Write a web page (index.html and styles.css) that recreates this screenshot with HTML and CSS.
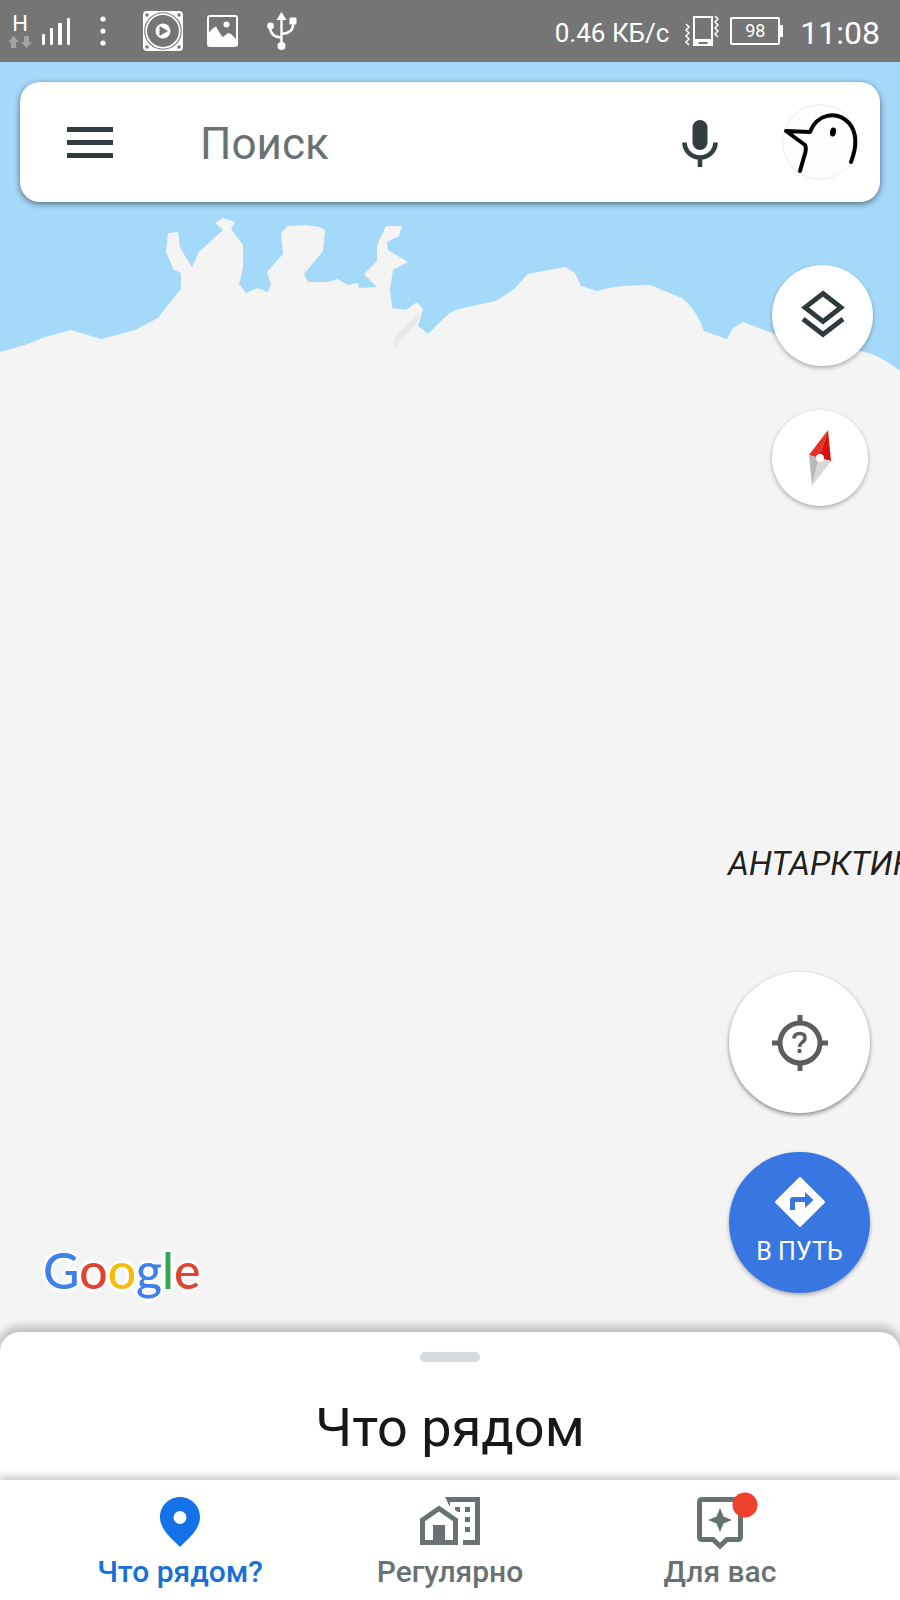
FILE: index.html
```html
<!DOCTYPE html>
<html lang="ru">
<head>
<meta charset="utf-8">
<meta name="viewport" content="width=device-width, initial-scale=1">
<title>Карты</title>
<link rel="stylesheet" href="styles.css">
</head>
<body>
<div class="app">
  <header class="status">
    <div class="status-group">
      <div class="network">
        <span class="network-type">H</span>
        <svg width="24" height="12" viewBox="0 0 24 12" fill="#a3a3a3"><path d="M5.500 0L11 6H8V12H3V6H0ZM16 0H21V6H24L18.500 12L13 6H16Z"/></svg>
      </div>
      <svg class="signal" width="28" height="28" viewBox="0 0 28 28" fill="#fff"><rect y="17" width="3" height="11" rx="1"/><rect x="8" y="11" width="3" height="17" rx="1"/><rect x="16" y="6" width="4" height="22" rx="1"/><rect x="25" y="1" width="3" height="27" rx="1"/></svg>
      <svg class="dots" width="6" height="30" viewBox="0 0 6 30" fill="#fff"><circle cx="3" cy="3" r="2.600"/><circle cx="3" cy="15" r="2.600"/><circle cx="3" cy="27" r="2.600"/></svg>
      <svg class="player" width="40" height="40" viewBox="0 0 40 40"><rect width="40" height="40" rx="4" fill="#fff"/><g fill="#757575"><circle cx="4" cy="4" r="1.700"/><circle cx="36" cy="4" r="1.700"/><circle cx="4" cy="36" r="1.700"/><circle cx="36" cy="36" r="1.700"/><circle cx="20" cy="20" r="18.800"/></g><circle cx="20" cy="20" r="16.800" fill="none" stroke="#fff" stroke-width="1.800"/><circle cx="20" cy="20" r="7.500" fill="#fff"/><path d="M16.500 15L25 20L16.500 25Z" fill="#757575"/></svg>
      <svg class="picture" width="32" height="32" viewBox="0 0 32 32"><rect x="1" y="1" width="29" height="30" rx="2" fill="none" stroke="#fff" stroke-width="2"/><circle cx="19.500" cy="9.500" r="3" fill="#fff"/><path d="M1 19L5 14L9 11.500L14 20L16 22L21 18L24 19L30 25V31H1Z" fill="#fff"/></svg>
      <svg width="30" height="40" viewBox="0 0 30 40"><path d="M14.500 6V34M3 15V17Q4 26 14 26.500M26 12V14Q26 22 14.500 23" fill="none" stroke="#fff" stroke-width="2.400"/><path d="M14.500 1L19.500 9H9.500Z" fill="#fff"/><circle cx="3.500" cy="15" r="3.400" fill="#fff"/><rect x="22.500" y="6.500" width="7" height="7" rx="1" fill="#fff"/><circle cx="14.500" cy="35" r="4" fill="#fff"/></svg>
    </div>
    <div class="status-group status-right">
      <span class="speed">0.46 КБ/с</span>
      <svg class="vibrate" width="34" height="32" viewBox="0 0 34 32" fill="none" stroke="#fff"><path d="M9 2H27V30H9Z" stroke-width="2"/><path d="M8 24H28V31H8Z" fill="#fff" stroke="none"/><path d="M13.500 28H22.500" stroke="#757575" stroke-width="2"/><path d="M1 9L4 12L1 15L4 18L1 21L4 24L1 27L4 30M30 1L33 4L30 7L33 10L30 13L33 16L30 19L33 22" stroke-width="1.500"/></svg>
      <span class="battery">98</span>
      <time class="clock">11:08</time>
    </div>
  </header>

  <main class="map">
    <svg class="coast" width="900" height="320" viewBox="0 62 900 320" preserveAspectRatio="none">
      <rect y="62" width="900" height="320" fill="#a5d9fa"/>
      <path fill="#f4f4f4" d="M0 352L25 345L45 337L71 330L101 339L135 330L158 318L168 305L181 289V273L174 270L166 252L168 233L178 232L180 248L192 267L199 252L223 230L215 223L223 218L235 222L231 229L243 245V268L239 284L246 293L257 288L268 292L271 285L267 272L283 254L281 233L288 226L305 225L320 227L325 230L323 251L304 274L308 282H328L337 279L348 285L358 283L359 288L377 287L364 274L377 261V245L386 226H402L399 236L387 242L388 250L408 262L393 270L390 289L392 308L406 310L417 302L423 309L418 326L428 334L443 319Q452 310 463 308L496 301L513 290L528 274L565 267L575 273L581 286L597 291Q615 285 650 285L682 298Q697 310 704 331L727 339L733 328L743 322L775 334L820 346L861 351Q880 355 900 371V382H0Z"/>
      <path fill="#e9e9e9" d="M421 311L416 324L394 348L395 337Z"/>
    </svg>

    <form class="search">
      <button class="icon-button" type="button" aria-label="Меню"><svg width="46" height="31" viewBox="0 0 46 31" fill="#333c3f"><path d="M0 0H46V5H0ZM0 13H46V18H0ZM0 26H46V31H0Z"/></svg></button>
      <input class="search-input" type="search" placeholder="Поиск" aria-label="Поиск">
      <button class="icon-button mic" type="button" aria-label="Голосовой поиск"><svg width="36" height="48" viewBox="0 0 36 48"><rect x="10.500" y="0" width="15" height="30" rx="7.500" fill="#333c3f"/><path d="M2.500 22.500A15.500 15 0 0 0 33.500 22.500M18 37V47" fill="none" stroke="#333c3f" stroke-width="4.600"/></svg></button>
      <button class="icon-button avatar" type="button" aria-label="Аккаунт"><svg width="76" height="76" viewBox="0 0 76 76"><circle cx="38" cy="38" r="37.300" fill="#fefefe" stroke="#e4e4e4" stroke-width=".7"/><g fill="none" stroke="#000" stroke-width="4" stroke-linecap="round" stroke-linejoin="round"><path d="M69 58C74 45 76 30 67 19C54 6 35 10 28 28L4 27L23 41Q25 45 22 53L18 67"/></g><ellipse cx="51" cy="28" rx="3" ry="4.500" transform="rotate(10 51 28)"/></svg></button>
    </form>

    <div class="controls">
      <button class="round layers" type="button" aria-label="Слои"><svg width="44" height="48" viewBox="0 0 44 48" fill="none" stroke="#30393c" stroke-width="4.800"><path d="M22 3.500L40 17.500L22 31.500L4 17.500Z"/><path d="M2 29L22 44.500L42 29"/></svg></button>
      <button class="round compass" type="button" aria-label="Компас"><svg width="24" height="58" viewBox="0 0 24 58"><path d="M20 1L1 26L11 29Z" fill="#e53027"/><path d="M20 1L23 32L11 29Z" fill="#d5150d"/><path d="M1 26L4 57L11 29Z" fill="#b9b9b9"/><path d="M23 32L4 57L11 29Z" fill="#d8d8d8"/><circle cx="12" cy="29" r="4" fill="#fff"/></svg></button>
      <span class="place">АНТАРКТИК</span>
      <button class="round locate" type="button" aria-label="Моё местоположение"><svg width="56" height="56" viewBox="0 0 56 56" fill="none" stroke="#5d5d5d" stroke-width="5"><circle cx="28" cy="28" r="20"/><path d="M28 0V8M28 48V56M0 28H8M48 28H56"/><path d="M22 23.500Q22 18.500 28 18.500Q33 18.500 33 23Q33 25.500 30 27.500Q27.500 29.500 27.500 32" stroke-width="3.500"/><circle cx="27.500" cy="36" r="2.200" fill="#5d5d5d" stroke="none"/></svg></button>
      <button class="round go" type="button"><svg width="50" height="50" viewBox="0 0 50 50"><path d="M23.500 1Q25 -1 26.500 1L49 23.500Q51 25 49 26.500L26.500 49Q25 51 23.500 49L1 26.500Q-1 25 1 23.500Z" fill="#fff"/><path d="M15 33V23Q15 20 18 20H30V15L38.500 23L30 31V25H20V33Z" fill="#3877e2"/></svg><span>В ПУТЬ</span></button>
    </div>
    <div class="google"><span class="blue">G</span><span class="red">o</span><span class="yellow">o</span><span class="blue">g</span><span class="green">l</span><span class="red">e</span></div>
  </main>

  <section class="sheet">
    <div class="handle"></div>
    <h1 class="sheet-title">Что рядом</h1>
  </section>

  <nav class="tabs">
    <a class="tab active" href="#nearby"><svg width="60" height="60" viewBox="0 0 60 60"><path fill="#1372e8" fill-rule="evenodd" d="M30 7C19 7 10 16 10 27C10 39 20 47 30 57C40 47 50 39 50 27C50 16 41 7 30 7ZM30 21A6.500 6.500 0 1 1 30 34A6.500 6.500 0 1 1 30 21Z"/></svg><span>Что рядом?</span></a>
    <a class="tab" href="#commute"><svg width="60" height="60" viewBox="0 0 60 60" fill="none" stroke="#6a7173" stroke-width="5"><path d="M2.500 52.500V30L19 18.500L35.500 30V52.500Z"/><path d="M13 35H25V52H13Z" fill="#6a7173" stroke="none"/><path d="M25 7H60V55H43V50H55V12H30V17Z" fill="#6a7173" stroke="none"/><path d="M35 17H40V22H38L35 20ZM45 17H50V22H45ZM45 27H50V32H45ZM45 37H50V42H45Z" fill="#6a7173" stroke="none"/></svg><span>Регулярно</span></a>
    <a class="tab" href="#foryou"><svg width="60" height="60" viewBox="0 0 60 60"><path d="M12 9.500H48Q50.500 9.500 50.500 12V47Q50.500 49.500 48 49.500H37L30 56L23 49.500H12Q9.500 49.500 9.500 47V12Q9.500 9.500 12 9.500Z" fill="none" stroke="#6a7173" stroke-width="5"/><path d="M30 18L33.500 26.500L42 30L33.500 33.500L30 42L26.500 33.500L18 30L26.500 26.500Z" fill="#6a7173"/><circle cx="55" cy="15" r="12.500" fill="#ed412e"/></svg><span>Для вас</span></a>
  </nav>
</div>
</body>
</html>
```
FILE: styles.css
```css
* { box-sizing: border-box; }
body { margin: 0; font-family: Roboto, "Liberation Sans", sans-serif; background: #f4f4f4; }
button { border: 0; padding: 0; background: none; font: inherit; cursor: pointer; }
svg { display: block; flex: none; overflow: visible; }

.app { display: flex; flex-direction: column; min-height: 100vh; overflow: hidden; }

.status { display: flex; justify-content: space-between; align-items: center; height: 62px; padding: 0 20px 0 8px; background: #757575; color: #fff; }
.status-group { display: flex; align-items: center; }
.network { display: flex; flex-direction: column; align-items: center; gap: 2px; }
.network-type { font-size: 22px; line-height: 20px; }
.signal { margin-left: 10px; }
.dots { margin-left: 30px; }
.player { margin-left: 37px; }
.picture { margin: 0 28px 0 24px; }
.speed { padding-top: 4px; font-size: 26px; }
.vibrate { margin: 0 11px 0 16px; }
.battery { position: relative; width: 50px; height: 28px; border: 2px solid #fff; border-radius: 2px; font-size: 18px; line-height: 24px; text-align: center; }
.battery::after { content: ""; position: absolute; right: -5px; top: 6px; width: 4px; height: 12px; background: #fff; }
.clock { margin-left: 20px; padding-top: 4px; font-size: 32px; }

.map { position: relative; flex: 1; display: flex; flex-direction: column; padding: 20px; background: #f4f4f4; }
.coast { position: absolute; top: 0; left: 0; width: 100%; }

.search { position: relative; display: flex; align-items: center; height: 120px; padding: 0 22px 0 47px; border-radius: 20px; background: #fff; box-shadow: 0 2px 6px rgba(0, 0, 0, .5); }
.search-input { flex: 1; min-width: 0; padding: 4px 0 0; margin: 0 20px 0 87px; border: 0; outline: 0; background: none; color: #333c3f; font: 44px Roboto, sans-serif; }
.search-input::placeholder { color: #6a7173; opacity: 1; }
.mic { padding-top: 4px; }
.avatar { margin-left: 64px; }

.controls { position: relative; flex: 1; display: flex; flex-direction: column; align-items: flex-end; padding: 63px 7px 0 0; }
.round { display: grid; place-items: center; flex: none; border-radius: 50%; background: #fff; box-shadow: 0 2px 4px rgba(0, 0, 0, .3); }
.layers { width: 101px; height: 101px; }
.layers svg { margin-bottom: 4px; }
.compass { width: 96px; height: 96px; margin: 44px 5px 0 0; }
.place { width: 172px; margin: 338px -27px 0 0; white-space: nowrap; color: #202020; font-size: 33px; font-style: italic; line-height: 40px; text-shadow: 0 0 3px #fff, 0 0 3px #fff; }
.locate, .go { width: 141px; height: 141px; margin-right: 3px; }
.locate { margin-top: 88px; box-shadow: 0 2px 4px rgba(0, 0, 0, .45); }
.go { display: flex; flex-direction: column; align-items: center; gap: 8px; margin-top: 39px; padding-top: 25px; background: #3877e2; color: #fff; font-size: 25px; line-height: 34px; }

.google { position: absolute; left: 43px; bottom: 32px; font: 50px/60px Lato, sans-serif; font-weight: 500; text-shadow: 0 0 4px #fff, 3px 0 2px #fff, -3px 0 2px #fff, 0 3px 2px #fff, 0 -3px 2px #fff; }
.blue { color: #3f80ec; }
.red { color: #df4433; }
.yellow { color: #f8bb0b; }
.green { color: #34a551; }

.sheet { position: relative; display: flex; flex-direction: column; align-items: center; height: 148px; padding-top: 20px; border-radius: 20px 20px 0 0; background: #fff; box-shadow: 0 -3px 8px 3px rgba(0, 0, 0, .22); }
.handle { width: 60px; height: 10px; border-radius: 5px; background: #d6dade; }
.sheet-title { margin: 34px 0 0; color: #171918; font-size: 54px; font-weight: 400; line-height: 64px; }

.tabs { position: relative; display: grid; grid-template-columns: 1fr 1fr 1fr; height: 120px; padding: 0 5%; background: #fff; box-shadow: 0 -2px 8px 1px rgba(0, 0, 0, .24); }
.tab { display: flex; flex-direction: column; align-items: center; padding-top: 10px; color: #6a7173; font-size: 30px; font-weight: 500; line-height: 44px; text-decoration: none; }
.active { color: #1670d8; }
```
